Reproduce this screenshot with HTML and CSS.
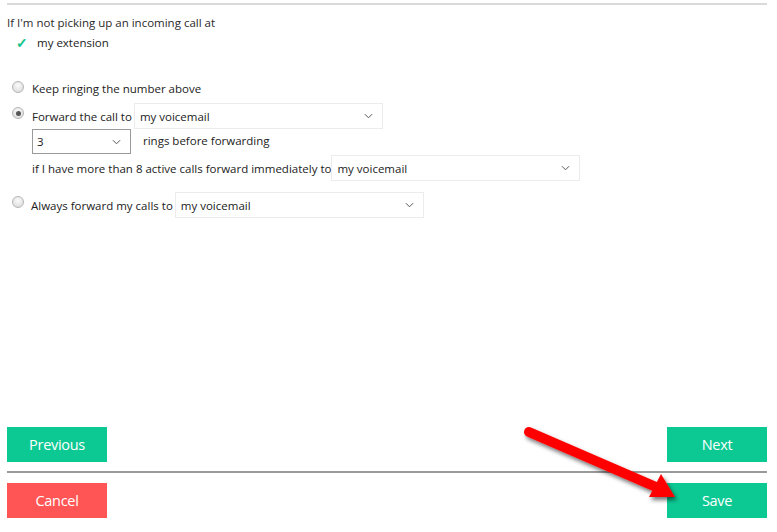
FILE: index.html
```html
<!DOCTYPE html>
<html>
<head>
<meta charset="utf-8">
<link rel="stylesheet" href="styles.css">
</head>
<body>
<div class="page">
  <div class="topline"></div>
  <div class="intro">If I'm not picking up an incoming call at</div>
  <div class="ext"><span class="check">✓</span><span>my extension</span></div>

  <div class="options">
    <div class="opt opt1">
      <span class="radio"></span><span class="lbl">Keep ringing the number above</span>
    </div>
    <div class="opt opt2">
      <span class="radio on"></span><span class="lbl">Forward the call to</span>
      <div class="select wide"><span>my voicemail</span><svg class="chev" viewBox="0 0 10 6"><path d="M1 1 L5 5 L9 1" fill="none" stroke="#555" stroke-width="1.1"/></svg></div>
    </div>
    <div class="sub">
      <div class="select small"><span>3</span><svg class="chev" viewBox="0 0 10 6"><path d="M1 1 L5 5 L9 1" fill="none" stroke="#555" stroke-width="1.1"/></svg></div>
      <span class="rings">rings before forwarding</span>
    </div>
    <div class="sub sub2">
      <span>if I have more than 8 active calls forward immediately to</span>
      <div class="select wide"><span>my voicemail</span><svg class="chev" viewBox="0 0 10 6"><path d="M1 1 L5 5 L9 1" fill="none" stroke="#555" stroke-width="1.1"/></svg></div>
    </div>
    <div class="opt opt3">
      <span class="radio"></span><span class="lbl">Always forward my calls to</span>
      <div class="select wide"><span>my voicemail</span><svg class="chev" viewBox="0 0 10 6"><path d="M1 1 L5 5 L9 1" fill="none" stroke="#555" stroke-width="1.1"/></svg></div>
    </div>
  </div>

  <div class="spacer"></div>

  <div class="btnrow">
    <button class="btn green">Previous</button>
    <button class="btn green">Next</button>
  </div>
  <div class="divider"></div>
  <div class="btnrow last">
    <button class="btn red">Cancel</button>
    <button class="btn green">Save</button>
  </div>
</div>
<svg class="arrow" width="777" height="532" viewBox="0 0 777 532">
  <defs>
    <filter id="sh" x="-20%" y="-20%" width="140%" height="140%">
      <feDropShadow dx="2" dy="3" stdDeviation="2" flood-color="#000" flood-opacity="0.55"/>
    </filter>
  </defs>
  <g filter="url(#sh)">
    <line x1="529" y1="432" x2="656" y2="487" stroke="#ff0000" stroke-width="10" stroke-linecap="round"/>
    <polygon points="649,497 661,474 675,497" fill="#ff0000"/>
  </g>
</svg>
</body>
</html>
```
FILE: styles.css
```css
html, body {
  margin: 0;
  padding: 0;
  background: #fff;
}
body {
  font-family: "Open Sans", "Noto Sans", sans-serif;
  font-size: 11.5px;
  color: #222;
}
.page {
  height: 532px;
  box-sizing: border-box;
  padding: 3px 10px 14px 7px;
  display: flex;
  flex-direction: column;
}
.topline {
  height: 2px;
  background: #dadada;
}
.intro {
  margin-top: 10px;
  line-height: 16px;
  color: #2a2a2a;
}
.ext {
  margin-top: 4px;
  display: flex;
  align-items: center;
  padding-left: 9px;
  line-height: 16px;
}
.check {
  color: #12c48c;
  font-weight: bold;
  font-size: 14px;
  width: 21px;
}
.options {
  margin-top: 24px;
  display: flex;
  flex-direction: column;
}
.opt {
  display: flex;
  align-items: center;
  height: 26px;
}
.lbl {
  margin-right: 2px;
}
.radio {
  flex: none;
  width: 12px;
  height: 12px;
  border-radius: 50%;
  box-sizing: border-box;
  border: 1px solid #b5b5b5;
  background: radial-gradient(circle at 50% 35%, #fafafa, #d8d8d8);
  margin: 0 8px 2px 5px;
  position: relative;
}
.radio.on::after {
  content: "";
  position: absolute;
  left: 2.5px;
  top: 2.5px;
  width: 5px;
  height: 5px;
  border-radius: 50%;
  background: #555;
}
.opt2 {
  margin-top: 2px;
}
.opt2 .radio {
  margin-bottom: 6px;
}
.select {
  box-sizing: border-box;
  height: 26px;
  border: 1px solid #ececec;
  display: flex;
  align-items: center;
  justify-content: space-between;
  padding: 0 9px 0 5px;
  background: #fff;
}
.select.wide {
  width: 249px;
}
.select.small {
  width: 99px;
  height: 25px;
  border-color: #9a9a9a;
  padding-left: 4px;
}
.chev {
  width: 9px;
  height: 6px;
}
.sub {
  display: flex;
  align-items: center;
  padding-left: 25px;
}
.rings {
  margin-left: 12px;
  margin-top: -3px;
}
.sub2 {
  margin-top: 1px;
}
.opt3 {
  margin-top: 11px;
}
.opt3 .radio {
  margin-right: 7px;
  margin-bottom: 6px;
}
.spacer {
  flex: 1;
}
.btnrow {
  display: flex;
  justify-content: space-between;
}
.btn {
  width: 100px;
  height: 35px;
  border: none;
  border-radius: 0;
  color: #fff;
  font-family: "Open Sans", "Noto Sans", sans-serif;
  font-size: 14.5px;
  letter-spacing: -0.3px;
  padding: 0;
  cursor: pointer;
}
.green {
  background: #0cc994;
}
.red {
  background: #ff5555;
}
.divider {
  height: 2px;
  background: #9a9a9a;
  margin: 9px 0 10px;
}
.arrow {
  position: absolute;
  left: 0;
  top: 0;
  pointer-events: none;
}
```
